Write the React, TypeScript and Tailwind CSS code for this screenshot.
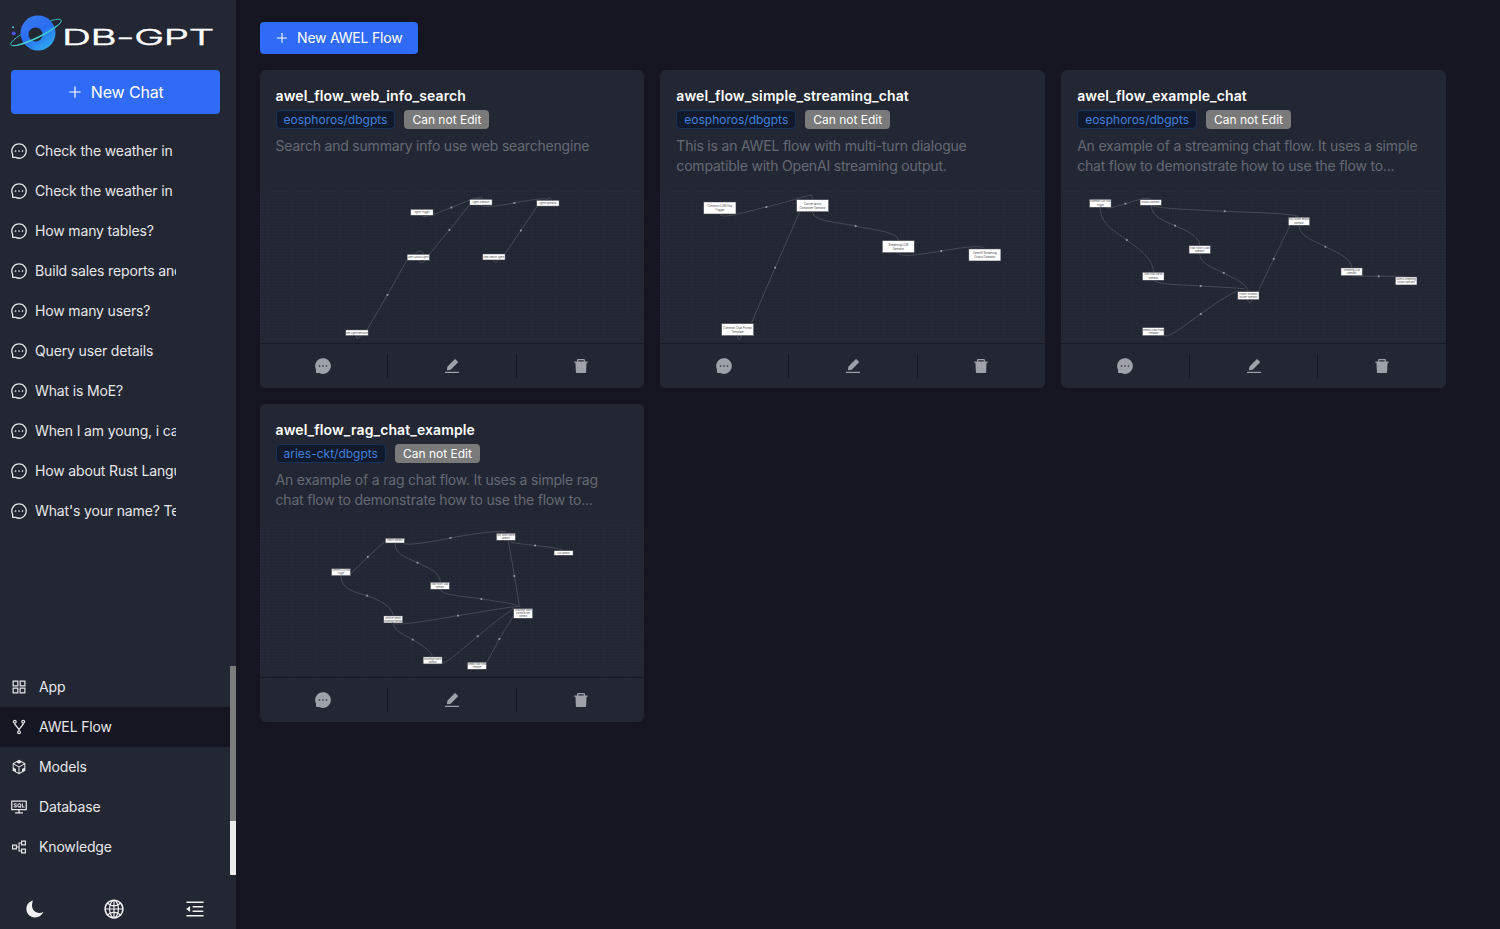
import {
  AiFillDelete,
  AiFillEdit,
  AiFillMessage,
  AiOutlineAppstore,
  AiOutlineCodeSandbox,
  AiOutlineConsoleSql,
  AiOutlineFork,
  AiOutlineGlobal,
  AiOutlineMenuFold,
  AiOutlineMessage,
  AiOutlinePartition,
  AiOutlinePlus,
} from "react-icons/ai";
import type { ReactNode } from "react";

type FlowNode = { x: number; y: number; w: number; h: number; label: string[] };
type Graph = { id: string; viewBox: string; nodes: FlowNode[]; edges: string[]; dots: [number, number][]; text: number };

const chats = [
  "Check the weather in Beijing",
  "Check the weather in Shanghai",
  "How many tables?",
  "Build sales reports and analysis",
  "How many users?",
  "Query user details",
  "What is MoE?",
  "When I am young, i can sing",
  "How about Rust Language",
  "What's your name? Tell me",
];

const navItems: { label: string; icon: ReactNode; active?: boolean }[] = [
  { label: "App", icon: <AiOutlineAppstore size={18} /> },
  { label: "AWEL Flow", icon: <AiOutlineFork size={18} />, active: true },
  { label: "Models", icon: <AiOutlineCodeSandbox size={18} /> },
  { label: "Database", icon: <AiOutlineConsoleSql size={18} /> },
  { label: "Knowledge", icon: <AiOutlinePartition size={18} /> },
];

const flows: { title: string; repo: string; desc: string[]; graph: Graph }[] = [
  {
    title: "awel_flow_web_info_search",
    repo: "eosphoros/dbgpts",
    desc: ["Search and summary info use web searchengine"],
    graph: {
      id: "g1",
      viewBox: "259.5 176 385 167",
      text: 2.4,
      nodes: [
        { x: 410.3, y: 209.3, w: 22.4, h: 6, label: ["Agent Trigger"] },
        { x: 469.3, y: 199.3, w: 22.4, h: 5.8, label: ["Agent Operator"] },
        { x: 536.3, y: 200.3, w: 22.4, h: 5.8, label: ["Agent Operator"] },
        { x: 406.7, y: 254.3, w: 22.4, h: 6, label: ["Awel Layout Agent"] },
        { x: 482.3, y: 254, w: 22.4, h: 6, label: ["Web Search Agent"] },
        { x: 345.3, y: 330, w: 22.4, h: 5.7, label: ["Awel Agent Resource"] },
      ],
      edges: [
        "M421 215.5 C423 218 430 216 451 207.5 S474 198 480 198",
        "M480.5 205.5 C484 208 500 205.5 514 203 S546 197 547.5 200",
        "M469 205 L449 230 L429 254",
        "M406.5 260 L387 295 L366.5 330",
        "M504.5 254 L520.5 230.5 L537 206",
        "M415 254 C418 250 422 250 423 254",
        "M418 260.3 C420 264 424 263 425 260",
        "M477 199 C481 196 482 197 481.5 199",
        "M547 200 C548 197 550 197 551 200",
        "M493 260 C494 263 496 263 498 260",
        "M356 336 C356 339 358 339 360 336",
      ],
      dots: [[451, 207.5], [514, 203], [449, 230], [387, 295], [520.5, 230.5]],
    },
  },
  {
    title: "awel_flow_simple_streaming_chat",
    repo: "eosphoros/dbgpts",
    desc: ["This is an AWEL flow with multi-turn dialogue", "compatible with OpenAI streaming output."],
    graph: {
      id: "g2",
      viewBox: "660.3 176 385 167",
      text: 2.8,
      nodes: [
        { x: 704, y: 202, w: 32.3, h: 12, label: ["Common LLM Http", "Trigger"] },
        { x: 797, y: 199.7, w: 32, h: 12, label: ["Conversation", "Composer Operator"] },
        { x: 882.7, y: 240.7, w: 32, h: 12, label: ["Streaming LLM", "Operator"] },
        { x: 969.3, y: 249, w: 32, h: 12, label: ["OpenAI Streaming", "Output Operator"] },
        { x: 722, y: 323.7, w: 32, h: 12, label: ["Common Chat Prompt", "Template"] },
      ],
      edges: [
        "M720 214 C722 219 738 214 766.7 207 S805 196 811.7 195 L813 199",
        "M812.7 212 C815 222 838 222 856 226 S898 232 898.7 240",
        "M898.7 253 C900 258 925 254 941.7 251 S980 245 985 248",
        "M800 212 L775.5 267.7 L751.7 323.3",
        "M738 336 C738 341 741 341 742 336",
      ],
      dots: [[766.7, 207], [856, 226], [941.7, 251], [775.5, 267.7]],
    },
  },
  {
    title: "awel_flow_example_chat",
    repo: "eosphoros/dbgpts",
    desc: ["An example of a streaming chat flow. It uses a simple", "chat flow to demonstrate how to use the flow to..."],
    graph: {
      id: "g3",
      viewBox: "1061.2 176 385 167",
      text: 2.3,
      nodes: [
        { x: 1089.7, y: 199.3, w: 21.6, h: 8, label: ["Common LLM Http", "Trigger"] },
        { x: 1140.3, y: 199.7, w: 21.4, h: 5.6, label: ["Branch Operator"] },
        { x: 1288.7, y: 217.3, w: 21.3, h: 8, label: ["Proxy Model Request", "Operator"] },
        { x: 1189.3, y: 245.7, w: 21.4, h: 8, label: ["Chat History Load", "Operator"] },
        { x: 1142.7, y: 272.3, w: 21.6, h: 8, label: ["User Input Parse", "Operator"] },
        { x: 1341.3, y: 268, w: 21.4, h: 7.7, label: ["Streaming LLM", "Operator"] },
        { x: 1395.7, y: 277, w: 21.6, h: 8, label: ["OpenAI Streaming", "Output Operator"] },
        { x: 1238, y: 291.7, w: 21.3, h: 8, label: ["History Dynamic", "Builder Operator"] },
        { x: 1142.7, y: 327.7, w: 21.6, h: 8, label: ["Common Chat Prompt", "Template"] },
      ],
      edges: [
        "M1108 208 C1112 208 1118 206 1125.7 203.7 S1146 197 1150 198.5",
        "M1151 205.5 C1160 209 1200 210 1225 211.3 S1295 213 1299 217",
        "M1151 205.5 C1153 218 1165 221 1175.3 225.7 S1199 235 1200 245.7",
        "M1100.3 207.5 C1101 225 1115 231 1127 240 S1153 258 1153.7 272",
        "M1199.7 253.7 C1201 265 1215 268 1224 273 S1247 283 1248.5 291.5",
        "M1153.7 280.5 C1160 285 1185 285 1201 286 S1240 288 1245 289",
        "M1164.5 335 C1168 339 1180 329 1201 314 S1232 293 1238 291",
        "M1258 292 L1274 259 L1290 226",
        "M1299.5 225.5 C1300 237 1315 241 1325.7 246.7 S1352 258 1352 268",
        "M1352 276 C1360 276.3 1370 276.3 1379 276.3 S1400 276 1407 277",
        "M1248 300 C1248 304 1252 304 1252.5 299.7",
      ],
      dots: [[1125.7, 203.7], [1225, 211.3], [1175.3, 225.7], [1127, 240], [1224, 273], [1201, 286], [1201, 314], [1274, 259], [1325.7, 246.7], [1379, 276.3]],
    },
  },
  {
    title: "awel_flow_rag_chat_example",
    repo: "aries-ckt/dbgpts",
    desc: ["An example of a rag chat flow. It uses a simple rag", "chat flow to demonstrate how to use the flow to..."],
    graph: {
      id: "g4",
      viewBox: "259.5 510 385 167",
      text: 2,
      nodes: [
        { x: 385, y: 538.3, w: 19, h: 4.7, label: ["Branch Operator"] },
        { x: 496, y: 533.3, w: 19, h: 7, label: ["Proxy Model Request", "Operator"] },
        { x: 553.7, y: 550.7, w: 19, h: 4.6, label: ["LLM Operator"] },
        { x: 331, y: 568.7, w: 19, h: 7, label: ["Common LLM Http", "Trigger"] },
        { x: 430, y: 582.3, w: 19, h: 7, label: ["Chat History Load", "Operator"] },
        { x: 513.3, y: 608.7, w: 19, h: 9.6, label: ["Knowledge Space", "Prompt Builder", "Operator"] },
        { x: 383.3, y: 616, w: 19, h: 7, label: ["Retriever Rerank", "Knowledge Operator"] },
        { x: 422.7, y: 657, w: 19, h: 7, label: ["Knowledge Search", "Operator"] },
        { x: 467, y: 662.3, w: 19, h: 7, label: ["Common Chat Prompt", "Template"] },
      ],
      edges: [
        "M350 574 L367.3 557 L384 541.5",
        "M403 544 C415 545 435 541 450 538 S490 531 505.5 531.5",
        "M394.5 543 C395 555 405 557 417 562.7 S439 572 440 582",
        "M340.5 576 C341 590 355 592 366.7 595.7 S392 607 393 616",
        "M439.5 589.5 C442 595 460 596 481 599 S515 604 518 606",
        "M393 623 C396 626 420 622 457.7 615.7 S515 606 520 606.5",
        "M393 623.5 C394 632 405 635 412.3 639.7 S431 650 432 657",
        "M441.7 663 C445 664 455 655 477.3 636.3 S505 615 513 608.5",
        "M486 663 L499 639 L513 616",
        "M508 541 L514 576 L519 606",
        "M510 542 C520 544 530 545 534.7 545.5 S558 548 563 550.5",
      ],
      dots: [[367.3, 557], [450, 538], [417, 562.7], [366.7, 595.7], [481, 599], [457.7, 615.7], [412.3, 639.7], [477.3, 636.3], [499, 639], [514, 576], [534.7, 545.5]],
    },
  },
];

function Logo() {
  return (
    <svg width="210" height="48" viewBox="0 0 210 48" className="block">
      <defs>
        <linearGradient id="ball" x1="0.1" y1="0" x2="0.8" y2="1">
          <stop offset="0" stopColor="#3b7cf2" />
          <stop offset="0.5" stopColor="#2a6cf0" />
          <stop offset="1" stopColor="#2fb0ee" />
        </linearGradient>
        <linearGradient id="orbit" x1="0" y1="1" x2="1" y2="0">
          <stop offset="0" stopColor="#4fe3c8" />
          <stop offset="1" stopColor="#2fb4e0" />
        </linearGradient>
      </defs>
      <ellipse cx="28" cy="22.5" rx="28" ry="5.5" transform="rotate(-26 28 22.5)" fill="none" stroke="#37c9d0" strokeWidth="0.8" />
      <circle cx="30" cy="23" r="17.5" fill="url(#ball)" />
      <circle cx="27.5" cy="24.5" r="7" fill="#232734" />
      <g transform="rotate(-26 28 22.5)">
        <path d="M0 22.5 A28 6 0 0 0 56 22.5 A28 4.4 0 0 1 0 22.5Z" fill="url(#orbit)" />
      </g>
      <circle cx="5" cy="17.3" r="1" fill="#42c9e8" />
      <circle cx="5.7" cy="23.3" r="1.9" fill="#4a55e8" />
      <text
        x="54"
        y="34.5"
        textLength="152"
        lengthAdjust="spacingAndGlyphs"
        fill="#ffffff"
        stroke="#ffffff"
        strokeWidth="0.5"
        fontSize="21"
        fontWeight="300"
        fontFamily="Inter, sans-serif"
      >
        DB-GPT
      </text>
    </svg>
  );
}

function MoonIcon() {
  return (
    <svg width="18" height="18" viewBox="0 0 18 18" fill="#f0f0f0">
      <path d="M7 .6 C3 1.6 .4 5 .4 9 C.4 13.9 4.2 17.5 9 17.5 C12.8 17.5 16 15.2 17.4 11.8 C16.2 12.6 14.9 13 13.3 13 C9.3 13 6 9.8 6 5.6 C6 3.8 6.4 2 7 .6Z" />
    </svg>
  );
}

function FlowPreview({ graph }: { graph: Graph }) {
  const [vx, vy] = graph.viewBox.split(" ").map(Number);
  return (
    <div className="h-[167px]">
      <svg width="385" height="167" viewBox={graph.viewBox} className="block w-full h-full" preserveAspectRatio="xMinYMin meet">
        <defs>
          <pattern id={graph.id} x={vx} y={vy} width="3" height="3" patternUnits="userSpaceOnUse">
            <rect width="1" height="1" fill="#2a2d3b" />
          </pattern>
        </defs>
        <rect x={vx} y={vy + 14} width="385" height="153" fill={`url(#${graph.id})`} />
        {graph.edges.map((d, i) => (
          <path key={i} d={d} fill="none" stroke="#565962" strokeWidth="0.7" />
        ))}
        {graph.dots.map(([x, y], i) => (
          <rect key={i} x={x - 0.9} y={y - 0.9} width="1.8" height="1.8" fill="#9a9ca2" />
        ))}
        {graph.nodes.map((n, i) => (
          <g key={i}>
            <rect x={n.x} y={n.y} width={n.w} height={n.h} fill="#ffffff" stroke="#3c3f49" strokeWidth="0.5" />
            {n.label.map((line, j) => (
              <text
                key={j}
                x={n.x + n.w / 2}
                y={n.y + n.h / 2 + (j - (n.label.length - 1) / 2) * graph.text * 1.4 + graph.text * 0.35}
                textAnchor="middle"
                fontSize={graph.text}
                fill="#4a4a4a"
                fontFamily="Inter, sans-serif"
              >
                {line}
              </text>
            ))}
          </g>
        ))}
      </svg>
    </div>
  );
}

function FlowCard({ flow }: { flow: (typeof flows)[number] }) {
  return (
    <div className="h-[318px] rounded-md bg-[#232734] overflow-hidden">
      <div className="h-[106px] pl-4 pr-3 pt-[17px]">
        <div className="text-sm leading-[18px] font-semibold text-white tracking-[0.1px]">{flow.title}</div>
        <div className="mt-[5px] flex items-center gap-[9px]">
          <span className="h-[19px] px-[7px] rounded border border-[#15325b] bg-[#111a2c] text-[#4080dc] text-xs leading-[17px]">
            {flow.repo}
          </span>
          <span className="h-[19px] px-2 rounded bg-[#7a7a7a] text-white text-xs leading-[19px]">Can not Edit</span>
        </div>
        <div className="mt-[7px] text-sm leading-5 text-[#666973] tracking-[-0.2px]">
          {flow.desc.map((line) => (
            <div key={line}>{line}</div>
          ))}
        </div>
      </div>
      <FlowPreview graph={flow.graph} />
      <div className="h-[45px] border-t border-[#181a26] flex items-center text-[#9ea1a9]">
        <div className="flex-1 flex justify-center">
          <AiFillMessage size={18} />
        </div>
        <div className="w-px h-6 bg-[#151622]" />
        <div className="flex-1 flex justify-center">
          <AiFillEdit size={18} />
        </div>
        <div className="w-px h-6 bg-[#151622]" />
        <div className="flex-1 flex justify-center">
          <AiFillDelete size={18} />
        </div>
      </div>
    </div>
  );
}

export default function App() {
  return (
    <div className="h-[929px] flex bg-[#151622] font-['Inter',sans-serif] overflow-hidden">
      <aside className="relative w-[236px] shrink-0 bg-[#232734] flex flex-col text-[#e6e6e8] tracking-[-0.15px]">
        <div className="h-[70px] pl-[8px] pt-[10px]">
          <Logo />
        </div>
        <div className="pl-[11px] pr-[16.5px]">
          <button className="w-full h-11 rounded bg-[#2f6bf6] text-white text-base flex items-center justify-center gap-2">
            <AiOutlinePlus size={16} />
            New Chat
          </button>
        </div>
        <div className="mt-[17px] flex-1">
          {chats.map((chat) => (
            <div key={chat} className="h-10 pl-[10px] flex items-center gap-[7px] text-sm">
              <AiOutlineMessage size={18} className="shrink-0" />
              <span className="w-[141px] overflow-hidden whitespace-nowrap">{chat}</span>
            </div>
          ))}
        </div>
        <nav className="w-[230px] pb-2">
          {navItems.map((item) => (
            <div
              key={item.label}
              className={`h-10 pl-[10px] flex items-center gap-[11px] text-sm ${item.active ? "bg-[#151622]" : ""}`}
            >
              {item.icon}
              {item.label}
            </div>
          ))}
        </nav>
        <div className="h-[54px] w-[230px] pl-[26px] pr-6 pt-[23px] text-[#f0f0f0]">
          <div className="flex items-center justify-between">
            <MoonIcon />
            <AiOutlineGlobal size={22} />
            <AiOutlineMenuFold size={22} />
          </div>
        </div>
        <div className="absolute right-0 bottom-[54px] w-[6px] h-[209px] bg-[#ececec]">
          <div className="h-[155px] bg-[#7c7c7c]" />
        </div>
      </aside>
      <main className="flex-1 pl-[23.5px] pt-[22px]">
        <button className="h-8 w-[158.5px] rounded bg-[#2f6bf6] text-white text-sm tracking-[-0.2px] flex items-center justify-center gap-2">
          <AiOutlinePlus size={14} />
          New AWEL Flow
        </button>
        <div className="mt-4 w-[1186.5px] grid grid-cols-3 gap-4">
          {flows.map((flow) => (
            <FlowCard key={flow.title} flow={flow} />
          ))}
        </div>
      </main>
    </div>
  );
}
